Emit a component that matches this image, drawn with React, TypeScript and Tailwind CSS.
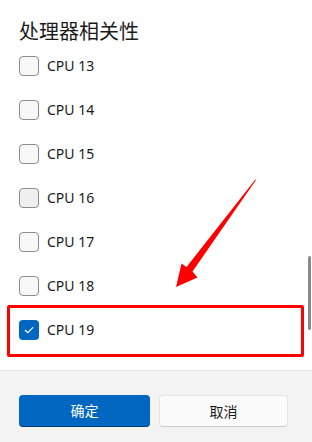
import React from "react";

const cpus = [13, 14, 15, 16, 17, 18, 19];

function Box({ checked, hover }: { checked?: boolean; hover?: boolean }) {
  if (checked) {
    return (
      <div className="w-[20px] h-[20px] rounded-[4px] bg-[#0067c0] flex items-center justify-center">
        <svg width="12" height="12" viewBox="0 0 12 12" fill="none">
          <path d="M2.2 6.3 L4.8 8.7 L9.8 3.6" stroke="white" strokeWidth="1.2" strokeLinecap="round" strokeLinejoin="round" />
        </svg>
      </div>
    );
  }
  return (
    <div
      className={
        hover
          ? "w-[20px] h-[20px] rounded-[4px] border border-[#8d8d8d] bg-[#efefef]"
          : "w-[20px] h-[20px] rounded-[4px] border border-[#8d8d8d] bg-[#f8f8f8]"
      }
    />
  );
}

export default function App() {
  return (
    <div
      className="relative w-[312px] h-[442px] bg-white flex flex-col overflow-hidden"
      style={{ fontFamily: "'Noto Sans', 'Noto Sans CJK SC', sans-serif" }}
    >
      <div className="flex-1 flex flex-col">
        <div
          className="pt-[18px] pl-[19px] h-[44px] text-[20px] leading-[26px] text-[#1b1b1b] font-normal"
          style={{ fontFamily: "'Noto Sans CJK SC', sans-serif" }}
        >
          处理器相关性
        </div>
        {cpus.map((n) => (
          <div key={n} className="h-[44px] flex items-center pl-[19px] gap-[8px]">
            <Box checked={n === 19} hover={n === 16} />
            <span className="text-[14px] text-[#1b1b1b] leading-[20px]">CPU {n}</span>
          </div>
        ))}
      </div>

      <div className="h-[72px] bg-[#f3f3f3] border-t border-[#e5e5e5] flex items-start pt-[24px] pl-[19px] gap-[9px]">
        <button
          className="w-[131px] h-[32px] rounded-[4px] bg-[#0067c0] border-b border-[#003e73] text-white text-[14px]"
          style={{ fontFamily: "'Noto Sans CJK SC', sans-serif" }}
        >
          确定
        </button>
        <button
          className="w-[129px] h-[32px] rounded-[4px] bg-[#fbfbfb] border border-[#e5e5e5] border-b-[#cccccc] text-[#1b1b1b] text-[14px]"
          style={{ fontFamily: "'Noto Sans CJK SC', sans-serif" }}
        >
          取消
        </button>
      </div>

      {/* scrollbar */}
      <div className="absolute left-[308px] top-[256px] w-[3px] h-[74px] rounded-full bg-[#8a8a8a]" />

      {/* red annotation box */}
      <div className="absolute left-[7px] top-[305px] w-[297px] h-[52px] border-[3px] border-[#ff0000] rounded-[2px]" />

      {/* red arrow */}
      <svg className="absolute left-0 top-0" width="312" height="442" viewBox="0 0 312 442">
        <polygon
          points="256,180 192.5,271.5 197.5,277.5 176,287 181.5,263.5 186.5,267 255.3,179.4"
          fill="#ff0000"
        />
      </svg>
    </div>
  );
}
